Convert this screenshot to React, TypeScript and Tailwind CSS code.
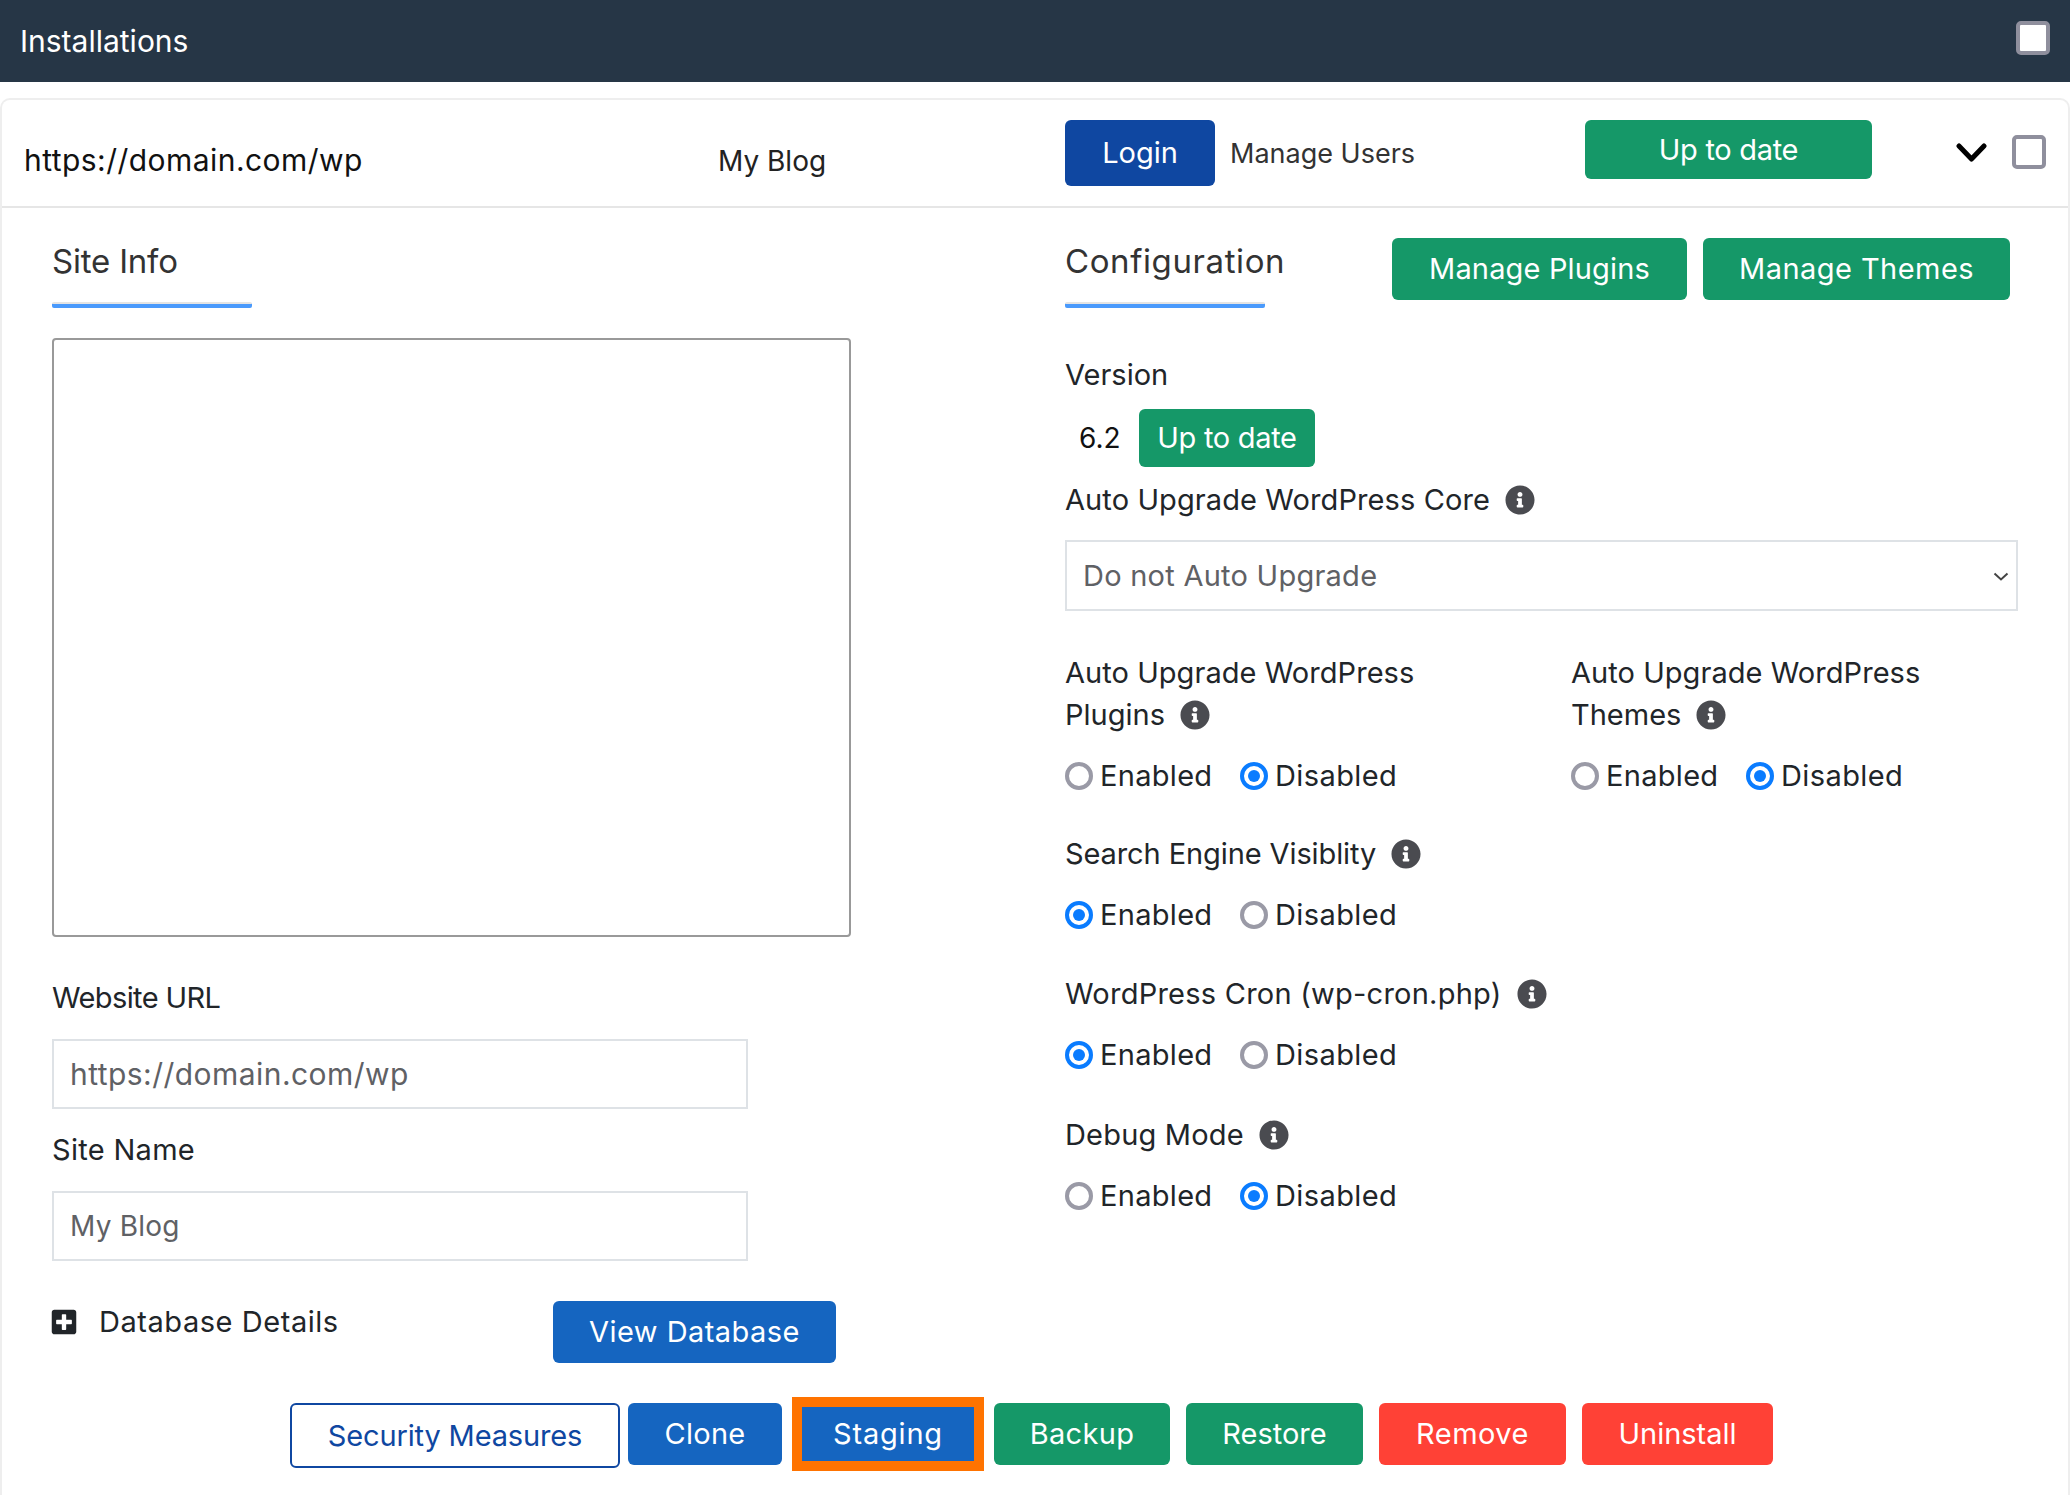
import React from "react";
import { FaInfoCircle, FaPlusSquare } from "react-icons/fa";

const Info = ({ cls = "ml-[15px]" }: { cls?: string }) => (
  <FaInfoCircle className={`${cls} shrink-0 text-[30px] text-[#4a4b50]`} />
);

const Check = ({ cls }: { cls: string }) => (
  <span className={`block h-[34px] w-[34px] shrink-0 rounded-[5px] border-[4px] border-[#8f8f9d] bg-white ${cls}`} />
);

const Radio = ({ on }: { on: boolean }) =>
  on ? (
    <span className="flex h-[28px] w-[28px] shrink-0 items-center justify-center rounded-full border-[4px] border-[#0a7cff] bg-white">
      <span className="block h-[12px] w-[12px] rounded-full bg-[#0a7cff]" />
    </span>
  ) : (
    <span className="block h-[28px] w-[28px] shrink-0 rounded-full border-[4px] border-[#9a9aa6] bg-white" />
  );

const Radios = ({ first }: { first: boolean }) => (
  <div className="mt-[26px] flex h-[28px] items-center">
    <div className="flex w-[175px] items-center gap-[7px]">
      <Radio on={first} />
      <span className="tracking-[0.3px] text-[#212529]">Enabled</span>
    </div>
    <div className="flex items-center gap-[7px]">
      <Radio on={!first} />
      <span className="tracking-[0.4px] text-[#212529]">Disabled</span>
    </div>
  </div>
);

const Heading = ({ text, track, children }: { text: string; track: string; children?: React.ReactNode }) => (
  <div className="flex">
    <div className="w-[327px]">
      <div className={`mt-[30px] h-[48px] text-[33px] leading-[46px] text-[#333] ${track}`}>{text}</div>
      <div className="mt-[16px] h-[6px] w-[200px] rounded-[2px] border-t-2 border-[#e4e4e4] bg-[#4a9afc]" />
    </div>
    {children}
  </div>
);

const btn = "flex shrink-0 items-center justify-center rounded-[6px] text-[29px] text-white";
const field = "block h-[70px] w-[696px] border-2 border-[#dee2e6] bg-white pl-[16px] text-[#5f6165] outline-none";

export default function App() {
  return (
    <div className="h-[1495px] w-[2070px] overflow-hidden bg-white font-['Inter',sans-serif] text-[29px] leading-[42px] text-[#212529]">
      <header className="flex h-[82px] items-center justify-between bg-[#263646] pl-[20px] pr-[20px]">
        <span className="text-[30px] text-white">Installations</span>
        <Check cls="mb-[6px]" />
      </header>

      <main className="mt-[16px] h-[1397px] rounded-t-[10px] border-2 border-b-0 border-[#eeeeee]">
        <div className="flex h-[108px] items-start border-b-2 border-[#e6e6e6]">
          <div className="mt-[39px] w-[716px] pl-[22px] text-[30px] tracking-[0.45px] text-[#111]">https://domain.com/wp</div>
          <div className="mt-[40px] w-[347px] text-[28px] text-[#222]">My Blog</div>
          <div className={`${btn} mt-[20px] h-[66px] w-[150px] bg-[#0f47a1]`}>Login</div>
          <div className="mt-[33px] ml-[15px] w-[355px] text-[27px] text-[#333]">Manage Users</div>
          <div className={`${btn} mt-[20px] h-[59px] w-[287px] bg-[#159868] text-[28px] tracking-[-0.3px]`}>Up to date</div>
          <svg className="ml-[84px] mt-[43px] h-[19px] w-[31px]" viewBox="0 0 31 19" fill="none">
            <path d="M3 3 L15.5 16 L28 3" stroke="#000" strokeWidth="5" strokeLinecap="round" strokeLinejoin="round" />
          </svg>
          <Check cls="ml-[25px] mt-[35px]" />
        </div>

        <div className="flex">
          <section className="w-[1064px] pl-[50px]">
            <Heading text="Site Info" track="tracking-[-0.2px]" />
            <div className="mt-[30px] h-[599px] w-[799px] rounded-[4px] border-2 border-[#999999]" />
            <div className="mt-[40px] tracking-[-0.6px]">Website URL</div>
            <input readOnly value="https://domain.com/wp" className={`${field} mt-[20px] text-[30px] tracking-[0.45px]`} />
            <div className="mt-[20px] tracking-[0.3px]">Site Name</div>
            <input readOnly value="My Blog" className={`${field} mt-[20px] text-[28px] tracking-[0.2px]`} />
            <div className="mt-[40px] flex w-[784px] items-start justify-between">
              <div className="flex items-center">
                <FaPlusSquare className="ml-[-2px] text-[28px] text-[#212529]" />
                <span className="ml-[21px] tracking-[0.55px] text-[#212529]">Database Details</span>
              </div>
              <div className={`${btn} h-[62px] w-[283px] bg-[#1565c0] tracking-[0.45px]`}>View Database</div>
            </div>
          </section>

          <section className="w-[1004px]">
            <Heading text="Configuration" track="tracking-[0.6px]">
              <div className={`${btn} mt-[30px] h-[62px] w-[295px] bg-[#159868] tracking-[0.15px]`}>Manage Plugins</div>
              <div className={`${btn} ml-[16px] mt-[30px] h-[62px] w-[307px] bg-[#159868] tracking-[0.45px]`}>Manage Themes</div>
            </Heading>

            <div className="mt-[46px]">Version</div>
            <div className="mt-[13px] flex h-[58px] items-center pl-[14px]">
              <span className="w-[60px] text-[28px] text-[#111]">6.2</span>
              <div className={`${btn} h-[58px] w-[176px] bg-[#159868] text-[28px] tracking-[-0.3px]`}>Up to date</div>
            </div>
            <div className="mt-[12px] flex items-center tracking-[0.1px]">
              Auto Upgrade WordPress Core
              <Info />
            </div>
            <div className="relative mt-[19px] h-[71px] w-[953px]">
              <select className="block h-full w-full appearance-none border-2 border-[#dee2e6] bg-white pl-[16px] tracking-[0.25px] text-[#5f6165] outline-none">
                <option>Do not Auto Upgrade</option>
              </select>
              <svg className="absolute right-[9px] top-[32px] h-[9px] w-[16px]" viewBox="0 0 16 9" fill="none">
                <path d="M1.5 1.5 L8 7.5 L14.5 1.5" stroke="#444" strokeWidth="2" />
              </svg>
            </div>

            <div className="mt-[41px] flex">
              <div className="w-[506px]">
                <div className="tracking-[0.05px]">Auto Upgrade WordPress</div>
                <div className="flex items-center">
                  Plugins
                  <Info />
                </div>
                <Radios first={false} />
              </div>
              <div>
                <div className="tracking-[0.05px]">Auto Upgrade WordPress</div>
                <div className="flex items-center">
                  Themes
                  <Info />
                </div>
                <Radios first={false} />
              </div>
            </div>

            <div className="mt-[43px] flex items-center tracking-[-0.1px]">
              Search Engine Visiblity
              <Info />
            </div>
            <Radios first={true} />

            <div className="mt-[44px] flex items-center tracking-[0.24px]">
              WordPress Cron (wp-cron.php)
              <Info />
            </div>
            <Radios first={true} />

            <div className="mt-[45px] flex items-center tracking-[0.18px]">
              Debug Mode
              <Info />
            </div>
            <Radios first={false} />
          </section>
        </div>

        <div className="mt-[40px] flex items-start pl-[288px]">
          <div className="flex h-[65px] w-[330px] shrink-0 items-center justify-center rounded-[6px] border-2 border-[#0f47a1] text-[29px] tracking-[-0.15px] text-[#0f47a1]">
            Security Measures
          </div>
          <div className={`${btn} ml-[8px] h-[62px] w-[154px] bg-[#1565c0] tracking-[0.3px]`}>Clone</div>
          <div className={`${btn} ml-[10px] mt-[-6px] h-[74px] w-[192px] !rounded-none border-[10px] border-[#ff7300] bg-[#1565c0] tracking-[0.8px]`}>Staging</div>
          <div className={`${btn} ml-[10px] h-[62px] w-[176px] bg-[#159868] tracking-[0.3px]`}>Backup</div>
          <div className={`${btn} ml-[16px] h-[62px] w-[177px] bg-[#159868]`}>Restore</div>
          <div className={`${btn} ml-[16px] h-[62px] w-[187px] bg-[#ff4136] tracking-[0.5px]`}>Remove</div>
          <div className={`${btn} ml-[16px] h-[62px] w-[191px] bg-[#ff4136]`}>Uninstall</div>
        </div>
      </main>
    </div>
  );
}
